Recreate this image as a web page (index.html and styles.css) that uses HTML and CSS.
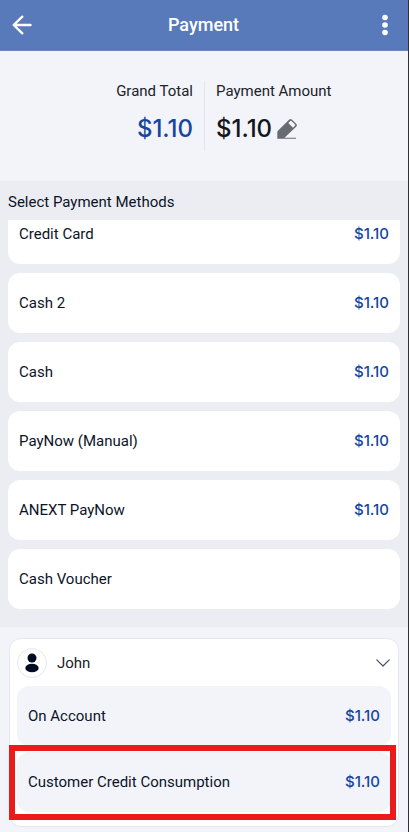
FILE: index.html
```html
<!DOCTYPE html>
<html lang="en">
<head>
<meta charset="utf-8">
<meta name="viewport" content="width=device-width, initial-scale=1">
<title>Payment</title>
<link rel="stylesheet" href="styles.css">
</head>
<body>
<header class="topbar">
  <button class="icon-button" type="button" aria-label="Back">
    <svg width="20" height="20" viewBox="0 0 20 20" fill="none" stroke="currentColor" stroke-width="2.4" stroke-linecap="round" stroke-linejoin="round"><path d="M10.300 1.700 1.700 10l8.600 8.300M2 10h16.500"/></svg>
  </button>
  <h1 class="title">Payment</h1>
  <button class="icon-button" type="button" aria-label="More options">
    <svg width="20" height="22" viewBox="0 0 20 22" fill="currentColor"><circle cx="10" cy="3.500" r="2.800"/><circle cx="10" cy="11" r="2.800"/><circle cx="10" cy="18.500" r="2.800"/></svg>
  </button>
</header>
<main class="page">
  <section class="summary">
    <div class="total total-grand">
      <span class="total-label">Grand Total</span>
      <span class="total-value accent">$1.10</span>
    </div>
    <div class="total total-payment">
      <span class="total-label">Payment Amount</span>
      <div class="total-edit">
        <span class="total-value">$1.10</span>
        <button class="edit" type="button" aria-label="Edit payment amount">
          <svg width="22" height="22" viewBox="0 0 22 22"><path fill="#686c70" fill-rule="evenodd" d="M1.300 20.500v-6.300q0-.8.600-1.400L13.300 1.500q1.300-1.100 2.500 0l4.600 4.500q1.100 1.200 0 2.400L8.500 19.700H20v1.100H1.300zM12.300 5l4.700 4.700 2.100-2.200q.3-.5 0-.9l-3.700-3.700q-.5-.4-1 0z"/></svg>
        </button>
      </div>
    </div>
  </section>
  <section class="methods">
    <h2 class="methods-title">Select Payment Methods</h2>
    <ul class="method-list">
      <li><button class="method" type="button"><span>Credit Card</span><span class="price">$1.10</span></button></li>
      <li><button class="method" type="button"><span>Cash 2</span><span class="price">$1.10</span></button></li>
      <li><button class="method" type="button"><span>Cash</span><span class="price">$1.10</span></button></li>
      <li><button class="method" type="button"><span>PayNow (Manual)</span><span class="price">$1.10</span></button></li>
      <li><button class="method" type="button"><span>ANEXT PayNow</span><span class="price">$1.10</span></button></li>
      <li><button class="method" type="button"><span>Cash Voucher</span></button></li>
    </ul>
  </section>
  <section class="account">
    <div class="account-card">
      <button class="customer" type="button" aria-expanded="true">
        <span class="avatar">
          <svg width="16" height="20" viewBox="0 0 16 20" fill="#020d22"><circle cx="8" cy="5" r="4.500"/><ellipse cx="8" cy="15" rx="6.700" ry="4.300"/></svg>
        </span>
        <span class="customer-name">John</span>
        <svg width="14" height="8" viewBox="0 0 14 8" fill="none" stroke="#4b5060" stroke-width="1.200" stroke-linecap="round" stroke-linejoin="round"><path d="m.8.8 6.200 6.200L13.200.8"/></svg>
      </button>
      <ul class="account-list">
        <li><button class="method tinted" type="button"><span>On Account</span><span class="price">$1.10</span></button></li>
        <li class="highlighted"><button class="method tinted" type="button"><span>Customer Credit Consumption</span><span class="price">$1.10</span></button></li>
      </ul>
    </div>
  </section>
</main>
</body>
</html>
```
FILE: styles.css
```css
* {
  box-sizing: border-box;
}

body {
  margin: 0;
  border-right: 1px solid #303136;
  background: #f3f4fa;
  color: #0b1428;
  font-family: Roboto, "Liberation Sans", sans-serif;
  font-size: 15px;
  line-height: 20px;
}

button {
  padding: 0;
  border: 0;
  background: none;
  color: inherit;
  font: inherit;
  cursor: pointer;
}

h1,
h2,
ul {
  margin: 0;
  padding: 0;
  font-weight: 400;
  list-style: none;
}

svg {
  display: block;
}

.topbar {
  display: flex;
  align-items: center;
  justify-content: space-between;
  height: 51px;
  padding: 0 13px 0 12px;
  border-bottom: 1px solid #6d86bb;
  background: #587abb;
  color: #fff;
}

.title {
  font-size: 18px;
  font-weight: 500;
}

.summary {
  display: grid;
  grid-template-columns: 1fr 1fr;
  padding: 30px 0;
}

.total {
  display: flex;
  flex-direction: column;
  gap: 12px;
  height: 70px;
  color: #202226;
}

.total-grand {
  align-items: flex-end;
  padding-right: 11px;
}

.total-payment {
  padding-left: 11px;
  border-left: 1px solid #e2e5ee;
}

.total-value {
  color: #151619;
  font-family: Inter, "Liberation Sans", sans-serif;
  font-size: 24px;
  font-weight: 500;
  line-height: 32px;
}

.total-edit {
  display: flex;
  align-items: center;
  gap: 4px;
}

.total-value.accent,
.price {
  color: #1646a0;
}

.price {
  font-family: Inter, "Liberation Sans", sans-serif;
  font-weight: 500;
}

.methods {
  padding: 11px 8px 18px;
  background: #ecedf2;
}

.methods-title {
  font-size: 15px;
}

.method-list {
  display: flex;
  flex-direction: column;
  gap: 9px;
  margin-top: 8px;
  overflow: hidden;
}

.method-list > :first-child {
  margin-top: -16px;
}

.method {
  display: flex;
  align-items: center;
  justify-content: space-between;
  width: 100%;
  height: 60px;
  padding: 0 11px;
  border-radius: 12px;
  background: #fff;
}

.account {
  padding: 11px 9px 5px;
}

.account-card {
  padding: 0 7px 14px;
  border: 1px solid #e5e8f0;
  border-radius: 12px;
  background: #fff;
}

.customer {
  display: flex;
  align-items: center;
  gap: 10px;
  width: 100%;
  height: 47px;
  padding-right: 1px;
  color: #202226;
  text-align: left;
}

.avatar {
  display: grid;
  place-items: center;
  width: 30px;
  height: 30px;
  border: 1px solid #e5e8f0;
  border-radius: 50%;
}

.customer-name {
  flex: 1;
}

.account-list {
  display: flex;
  flex-direction: column;
  gap: 6px;
}

.method.tinted {
  background: #f3f4fa;
}

.highlighted {
  position: relative;
}

.highlighted::after {
  content: "";
  position: absolute;
  inset: -7px -5px -8px -8px;
  border: 6px solid #e91b1b;
  pointer-events: none;
}
```
